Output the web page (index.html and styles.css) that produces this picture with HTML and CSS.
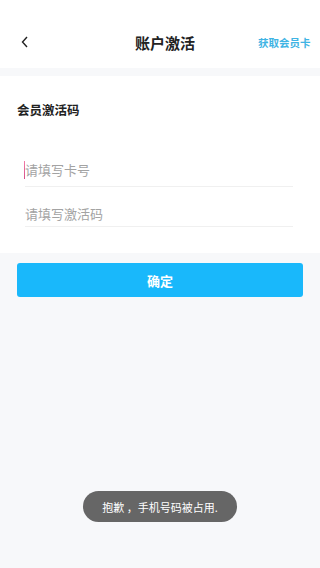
FILE: index.html
```html
<!DOCTYPE html>
<html lang="zh-CN">
<head>
    <meta charset="UTF-8">
    <meta name="viewport" content="width=device-width, initial-scale=1.0">
    <title>账户激活</title>
    <link rel="stylesheet" href="styles.css">
</head>
<body>

    <div class="header">
        <span class="back">
            <svg width="10" height="12" viewBox="0 0 10 12"><path d="M7 1 L2.5 6 L7 11" fill="none" stroke="#222" stroke-width="1.4"/></svg>
        </span>
        <h1>账户激活</h1>
        <a class="get-card">获取会员卡</a>
    </div>

    <div class="card">
        <h2>会员激活码</h2>
        <div class="field first">
            <span class="caret"></span>
            <input type="text" placeholder="请填写卡号">
        </div>
        <div class="field second">
            <input type="text" placeholder="请填写激活码">
        </div>
    </div>

    <div class="actions">
        <button class="submit">确定</button>
    </div>

    <div class="toast">抱歉 ，手机号码被占用.</div>

</body>
</html>
```

FILE: styles.css
```css
body {
    font-family: "Noto Sans CJK SC", "Noto Sans", sans-serif;
    margin: 0;
    width: 320px;
    height: 568px;
    background-color: #f7f8fa;
    position: relative;
    overflow: hidden;
}

.header {
    height: 68px;
    background-color: #fff;
    display: flex;
    align-items: center;
    justify-content: space-between;
    padding: 16px 10px 0 20px;
    box-sizing: border-box;
    margin-bottom: 8px;
}

.back {
    width: 52px;
    display: flex;
}

.header h1 {
    margin: 0;
    font-size: 15px;
    font-weight: bold;
    color: #222;
}

.get-card {
    width: 52px;
    font-size: 10.5px;
    font-weight: bold;
    color: #3fb4e4;
    white-space: nowrap;
}

.card {
    background-color: #fff;
    padding: 24px 17px 26px;
}

.card h2 {
    margin: 0 0 33px;
    font-size: 12.5px;
    font-weight: bold;
    color: #222;
    line-height: 20px;
}

.field {
    position: relative;
    margin: 0 10px 0 8px;
    border-bottom: 1px solid #f0f0f0;
}

.field input {
    display: block;
    width: 100%;
    border: none;
    outline: none;
    padding: 0;
    font-family: inherit;
    font-size: 13px;
    color: #333;
    background: transparent;
}

.first input {
    height: 33px;
}

.second {
    margin-top: 14px;
}

.second input {
    height: 25px;
}

.field input::placeholder {
    color: #a3a3a3;
}

.caret {
    position: absolute;
    left: -1px;
    top: 8px;
    width: 1px;
    height: 18px;
    background: linear-gradient(#f17ca8, #d64f8a);
}

.actions {
    padding: 10px 17px;
}

.submit {
    width: 100%;
    height: 34px;
    border: none;
    border-radius: 3px;
    background-color: #19b8fb;
    color: #fff;
    font-family: inherit;
    font-size: 13px;
    font-weight: bold;
}

.toast {
    position: absolute;
    left: 83px;
    top: 491px;
    width: 154px;
    height: 31px;
    border-radius: 16px;
    background-color: #666;
    color: #fff;
    font-size: 11px;
    display: flex;
    align-items: center;
    justify-content: center;
}
```
